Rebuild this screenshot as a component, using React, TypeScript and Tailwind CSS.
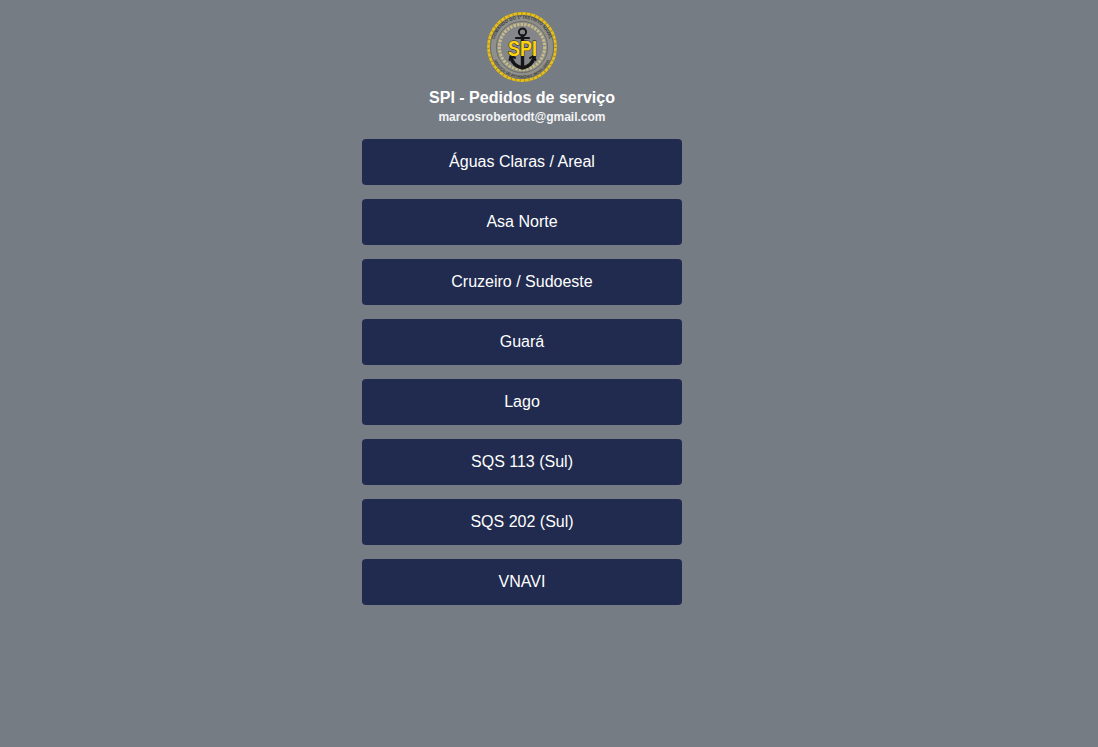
const units = [
  'Águas Claras / Areal',
  'Asa Norte',
  'Cruzeiro / Sudoeste',
  'Guará',
  'Lago',
  'SQS 113 (Sul)',
  'SQS 202 (Sul)',
  'VNAVI',
]

function Logo() {
  return (
    <svg width="72" height="72" viewBox="0 0 72 72" className="block">
      <defs>
        <path id="ringTop" d="M 7.5 36 A 28.5 28.5 0 0 1 64.5 36" />
        <path id="ringBottom" d="M 5 36 A 31 31 0 0 0 67 36" />
      </defs>
      <circle cx="36" cy="36" r="33.6" fill="#8f908c" stroke="#e6bf1c" strokeWidth="2.6" />
      <circle cx="36" cy="36" r="33.6" fill="none" stroke="#a88c18" strokeWidth="2.6" strokeDasharray="1 3.5" />
      <circle cx="36" cy="36" r="31.6" fill="none" stroke="#55554e" strokeWidth="0.6" />
      <circle cx="36" cy="36" r="25.6" fill="none" stroke="#55554e" strokeWidth="0.6" />
      <circle cx="36" cy="36" r="22.6" fill="#84868a" stroke="#c8bd86" strokeWidth="3" strokeDasharray="2.4 1.2" />
      <text fontFamily="'Liberation Sans', sans-serif" fontSize="4.4" fill="#3a3a35" fontWeight="700">
        <textPath href="#ringTop" startOffset="50%" textAnchor="middle">COMANDO DO 1º DISTRITO NAVAL</textPath>
      </text>
      <text fontFamily="'Liberation Sans', sans-serif" fontSize="3.6" fill="#3a3a35" fontWeight="700">
        <textPath href="#ringBottom" startOffset="50%" textAnchor="middle">SERVIÇO DE PATRIMÔNIO IMOBILIÁRIO</textPath>
      </text>
      {/* anchor */}
      <g fill="none" stroke="#161616" strokeLinecap="round">
        <circle cx="36.5" cy="21" r="3.6" strokeWidth="2" />
        <path d="M36.5 25V55" strokeWidth="3.4" />
        <path d="M30 27H43" strokeWidth="2.2" />
        <path d="M25 46C26 52 31 56 36.5 57C42 56 47 52 48 46" strokeWidth="3.6" />
        <path d="M23.5 49L25 44.5L29 47M49.5 49L48 44.5L44 47" strokeWidth="2" />
      </g>
      <text
        x="36.5"
        y="45"
        textAnchor="middle"
        fontFamily="'Liberation Sans', sans-serif"
        fontSize="22"
        fontWeight="700"
        fill="#ffd30f"
        stroke="#1a1a1a"
        strokeWidth="1"
        paintOrder="stroke"
        textLength="29"
        lengthAdjust="spacingAndGlyphs"
      >
        SPI
      </text>
    </svg>
  )
}

export default function App() {
  return (
    <div className="min-h-screen bg-[#767c84] font-['Liberation_Sans',Arial,sans-serif] text-white">
      <div className="ml-[362px] flex w-[320px] flex-col items-center pt-[11px]">
        <Logo />
        <h1 className="mt-[4px] whitespace-nowrap text-[16px] font-bold leading-[22px]">SPI - Pedidos de serviço</h1>
        <p className="mt-[1px] whitespace-nowrap text-[12px] font-bold leading-[14px] text-[#f3f4f6]">marcosrobertodt@gmail.com</p>
        <div className="mt-[15px] flex w-full flex-col gap-[14px]">
          {units.map((unit) => (
            <button
              key={unit}
              className="flex h-[46px] w-full items-center justify-center rounded-[4px] bg-[#202b4f] text-[16px] text-white"
            >
              {unit}
            </button>
          ))}
        </div>
      </div>
    </div>
  )
}
